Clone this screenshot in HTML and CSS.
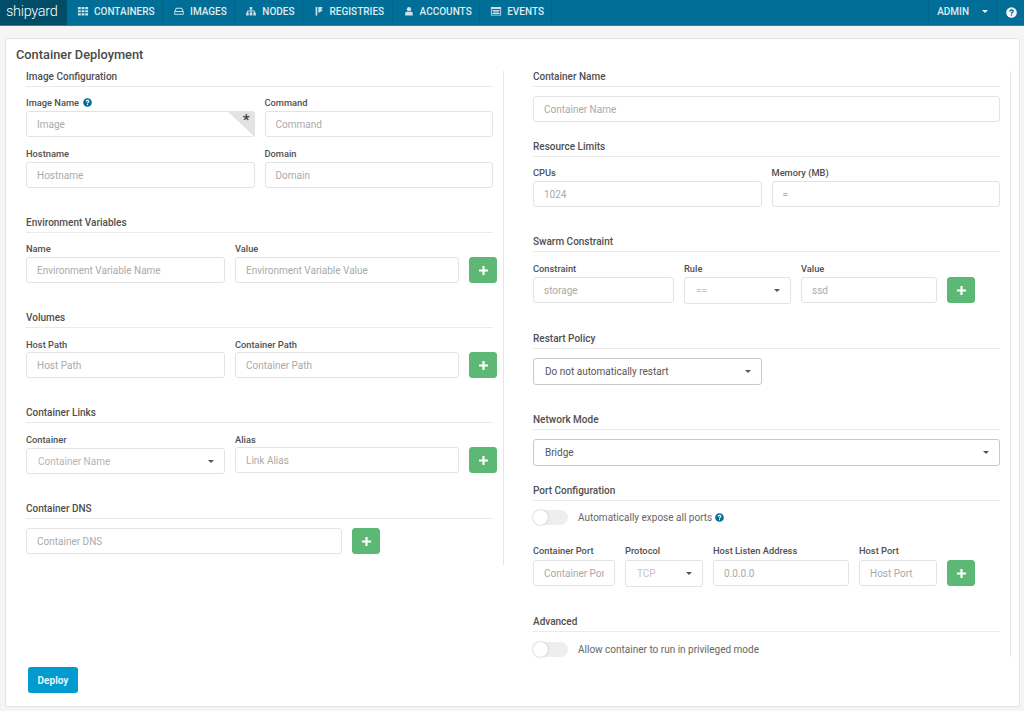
FILE: index.html
```html
<!DOCTYPE html>
<html lang="en">
<head>
<meta charset="utf-8">
<title>Shipyard</title>
<link rel="stylesheet" href="styles.css">
</head>
<body>
<svg class="defs" width="0" height="0" aria-hidden="true">
  <symbol id="help" viewBox="0 0 10 10"><circle cx="5" cy="5" r="4.8" fill="currentColor"/><path class="qm" d="M3 4c0-1.3.9-2 2.1-2s2 .7 2 1.8c0 .8-.5 1.2-1 1.5-.4.3-.5.5-.5.9H4.4c0-.9.2-1.3.8-1.7.4-.3.6-.4.6-.7s-.3-.5-.7-.5-.8.2-.9.8z"/><rect class="qm" x="4.4" y="6.7" width="1.2" height="1.3"/></symbol>
  <symbol id="plus" viewBox="0 0 10 10"><path d="M3.8 0h2.4v3.8H10v2.4H6.2V10H3.8V6.2H0V3.8h3.8z" fill="#fff"/></symbol>
</svg>
<nav class="nav">
  <a class="brand">shipyard</a>
  <a class="nav-item"><svg class="nav-ico" viewBox="0 0 12 10"><path d="M0 0h3.4v2.6H0zM4.3 0h3.4v2.6H4.3zM8.6 0H12v2.6H8.6zM0 3.7h3.4v2.6H0zM4.3 3.7h3.4v2.6H4.3zM8.6 3.7H12v2.6H8.6zM0 7.4h3.4V10H0zM4.3 7.4h3.4V10H4.3zM8.6 7.4H12V10H8.6z"/></svg>CONTAINERS</a>
  <a class="nav-item"><svg class="nav-ico" viewBox="0 0 12 10"><path d="M2.5 1h7L11.5 5v4h-11V5zM3.2 2 1.9 4.7h8.2L8.8 2zM1.5 5.8v2.2h9V5.8z" fill-rule="evenodd"/></svg>IMAGES</a>
  <a class="nav-item"><svg class="nav-ico" viewBox="0 0 12 10"><path d="M4.5 0h3v2.8H6.5v1.4h4v2.2h1.2V10H8.7V6.4H9.5V5.2h-3v1.2h1V10h-3V6.4h1V5.2h-3v1.2h.8V10H.3V6.4h1.2V4.2h4V2.8h-1z"/></svg>NODES</a>
  <a class="nav-item"><svg class="nav-ico nav-ico-reg" viewBox="0 0 8 10"><path d="M0 0h2v10H0zM3.2 0H8v1.2L6 3h2v1.2L4.6 6.4H3.2z"/></svg>REGISTRIES</a>
  <a class="nav-item"><svg class="nav-ico" viewBox="0 0 12 10"><circle cx="6" cy="2.5" r="2.5"/><path d="M1.5 10V7.6C1.5 6 3 5.4 4 5.2c1.2.7 2.8.7 4 0 1 .2 2.5.8 2.5 2.4V10z"/></svg>ACCOUNTS</a>
  <a class="nav-item"><svg class="nav-ico" viewBox="0 0 12 10"><path d="M0 0h12v10H0zM1 2.4v6.6h10V2.4zM2 3.6h8v1H2zM2 5.4h8v1H2zM2 7.1h8v1H2z" fill-rule="evenodd"/></svg>EVENTS</a>
  <span class="nav-fill"></span>
  <a class="nav-item nav-admin">ADMIN<span class="caret caret-white"></span></a>
  <a class="nav-help"><svg class="nav-help-ico"><use href="#help"/></svg></a>
</nav>

<main class="card">
  <h1 class="title">Container Deployment</h1>
  <div class="cols">
    <div class="col col-left">
      <section class="sec">
        <h2 class="head">Image Configuration</h2>
        <div class="row row-half">
          <div class="field"><label class="lbl">Image Name <svg class="help"><use href="#help"/></svg></label><div class="required"><input class="inp" placeholder="Image"><span class="corner"></span><span class="star">*</span></div></div>
          <div class="field"><label class="lbl">Command</label><input class="inp" placeholder="Command"></div>
        </div>
        <div class="row row-half">
          <div class="field"><label class="lbl">Hostname</label><input class="inp" placeholder="Hostname"></div>
          <div class="field"><label class="lbl">Domain</label><input class="inp" placeholder="Domain"></div>
        </div>
      </section>
      <section class="sec sec-left">
        <h2 class="head">Environment Variables</h2>
        <div class="row row-pair">
          <div class="field"><label class="lbl">Name</label><input class="inp" placeholder="Environment Variable Name"></div>
          <div class="field"><label class="lbl">Value</label><input class="inp" placeholder="Environment Variable Value"></div>
          <button class="add"><svg class="plus"><use href="#plus"/></svg></button>
        </div>
      </section>
      <section class="sec sec-left">
        <h2 class="head head-loose">Volumes</h2>
        <div class="row row-pair">
          <div class="field"><label class="lbl lbl-short">Host Path</label><input class="inp" placeholder="Host Path"></div>
          <div class="field"><label class="lbl lbl-short">Container Path</label><input class="inp" placeholder="Container Path"></div>
          <button class="add"><svg class="plus"><use href="#plus"/></svg></button>
        </div>
      </section>
      <section class="sec sec-left">
        <h2 class="head head-loose">Container Links</h2>
        <div class="row row-pair">
          <div class="field"><label class="lbl">Container</label><div class="sel sel-dim sel-links">Container Name<span class="caret"></span></div></div>
          <div class="field"><label class="lbl lbl-short">Alias</label><input class="inp" placeholder="Link Alias"></div>
          <button class="add"><svg class="plus"><use href="#plus"/></svg></button>
        </div>
      </section>
      <section class="sec sec-dns">
        <h2 class="head head-tight">Container DNS</h2>
        <div class="row row-single">
          <input class="inp" placeholder="Container DNS">
          <button class="add"><svg class="plus"><use href="#plus"/></svg></button>
        </div>
      </section>
    </div>
    <div class="col col-right">
      <section class="sec">
        <h2 class="head head-tight">Container Name</h2>
        <input class="inp" placeholder="Container Name">
      </section>
      <section class="sec sec-res">
        <h2 class="head">Resource Limits</h2>
        <div class="row row-half">
          <div class="field"><label class="lbl">CPUs</label><input class="inp" placeholder="1024"></div>
          <div class="field"><label class="lbl">Memory (MB)</label><input class="inp" placeholder="="></div>
        </div>
      </section>
      <section class="sec sec-swarm">
        <h2 class="head head-loose">Swarm Constraint</h2>
        <div class="row row-swarm">
          <div class="field"><label class="lbl">Constraint</label><input class="inp" placeholder="storage"></div>
          <div class="field"><label class="lbl">Rule</label><div class="sel sel-dim sel-faint">==<span class="caret"></span></div></div>
          <div class="field"><label class="lbl">Value</label><input class="inp" placeholder="ssd"></div>
          <button class="add"><svg class="plus"><use href="#plus"/></svg></button>
        </div>
      </section>
      <section class="sec sec-wide">
        <h2 class="head head-tight">Restart Policy</h2>
        <div class="sel sel-strong sel-policy">Do not automatically restart<span class="caret"></span></div>
      </section>
      <section class="sec sec-wide">
        <h2 class="head head-tight">Network Mode</h2>
        <div class="sel sel-strong">Bridge<span class="caret"></span></div>
      </section>
      <section class="sec sec-port">
        <h2 class="head head-toggle">Port Configuration</h2>
        <div class="toggle-row"><span class="toggle"><span class="knob"></span></span><span class="toggle-text">Automatically expose all ports</span><svg class="help help-toggle"><use href="#help"/></svg></div>
        <div class="row row-port">
          <div class="field"><label class="lbl lbl-tall">Container Port</label><input class="inp" placeholder="Container Port"></div>
          <div class="field"><label class="lbl lbl-tall">Protocol</label><div class="sel sel-dim sel-faint">TCP<span class="caret"></span></div></div>
          <div class="field"><label class="lbl lbl-tall">Host Listen Address</label><input class="inp" placeholder="0.0.0.0"></div>
          <div class="field"><label class="lbl lbl-tall">Host Port</label><input class="inp" placeholder="Host Port"></div>
          <button class="add"><svg class="plus"><use href="#plus"/></svg></button>
        </div>
      </section>
      <section class="sec sec-wide">
        <h2 class="head head-tight">Advanced</h2>
        <div class="toggle-row"><span class="toggle"><span class="knob"></span></span><span class="toggle-text">Allow container to run in privileged mode</span></div>
      </section>
    </div>
  </div>
  <button class="deploy">Deploy</button>
</main>
</body>
</html>
```

FILE: styles.css
```css
* { box-sizing: border-box; }
html, body { margin: 0; height: 711px; overflow: hidden; }
body { background: #f5f5f5; font-family: Roboto, "Liberation Sans", sans-serif; color: #555; }
.defs { position: absolute; }
.qm { fill: var(--qm, #fff); }

.nav { display: flex; height: 26px; background: #006e96; border-bottom: 1px solid #0090bd; color: #dfecf2; font-size: 10px; font-weight: 500; }
.brand { width: 67px; background: #014c66; color: #fff; font-size: 14.5px; font-weight: 300; line-height: 24px; padding-left: 6px; letter-spacing: -0.3px; }
.nav-item { display: flex; align-items: center; height: 25px; padding: 0 7.5px 2px 10px; border-right: 1px solid #00648a; gap: 5px; }
.nav-ico { width: 12px; height: 8.5px; fill: #cfe0e8; flex: none; }
.nav-ico-reg { width: 8px; margin: 0 2px 0 1.5px; }
.nav-fill { flex: 1; }
.nav-admin { padding: 0 8px 2px 8px; border-left: 1px solid #00648a; gap: 13px; }
.nav-help { width: 27px; display: flex; align-items: center; justify-content: center; height: 24px; }
.nav-help-ico { width: 11px; height: 11px; margin-left: 2px; color: #f4f8fa; --qm: #006e96; }

.caret { border-left: 3.5px solid transparent; border-right: 3.5px solid transparent; border-top: 3.5px solid #555; width: 0; height: 0; }
.caret-white { border-top-color: #f2f7f9; }

.card { display: flex; flex-direction: column; align-items: flex-start; width: 1015px; height: 669px; margin: 12px 0 0 5px; background: #fff; border: 1px solid #e5e5e5; border-radius: 2px; padding: 0 20px; }
.title { margin: 8px 0 0 -10px; font-size: 12.8px; line-height: 16px; font-weight: 500; color: #4a4a4a; }
.cols { display: grid; grid-template-columns: 467px 467px; column-gap: 40px; margin-top: 8px; }
.col { position: relative; }
.col-left { height: 494px; }
.col-right { height: 586px; }
.col::after { content: ""; position: absolute; left: 477px; top: 0; bottom: 0; width: 1px; background: #e6e6e6; }
.head { margin: 0 0 10px; height: 16px; font-size: 10px; line-height: 12px; font-weight: 500; color: #4f4f4f; border-bottom: 1px solid #eaeaea; }
.head-tight { margin-bottom: 9px; }
.head-loose { margin-bottom: 11px; }
.head-toggle { margin-bottom: 8px; }

.sec-left { margin-top: 28px; }
.sec-dns { margin-top: 29px; }
.sec-res { margin-top: 19px; }
.sec-swarm { margin-top: 28px; }
.sec-wide { margin-top: 29px; }
.sec-port { margin-top: 19px; }

.row { display: grid; align-items: end; }
.row + .row { margin-top: 10px; }
.row-half { grid-template-columns: 1fr 1fr; column-gap: 10px; }
.row-pair { grid-template-columns: 199px 224px 28px; column-gap: 10px; }
.row-single { grid-template-columns: 316px 28px; column-gap: 10px; }
.row-swarm { grid-template-columns: 141px 107px 136px 28px; column-gap: 10px; }
.row-port { grid-template-columns: 82px 78px 136px 78px 28px; column-gap: 10px; margin-top: 20px; }

.field { min-width: 0; }
.lbl { display: block; height: 14px; font-size: 9.3px; line-height: 11px; font-weight: 500; color: #505050; }
.lbl-tall { height: 15px; }
.lbl-short { height: 13px; }
.help { width: 9px; height: 9px; color: #006e96; margin-left: 2px; vertical-align: -1px; }
.inp { display: block; width: 100%; height: 26px; margin-bottom: 1px; border: 1px solid #e3e3e3; border-radius: 3px; background: #fff; padding: 0 10px; font: 400 10px Roboto, sans-serif; color: #555; outline: none; }
.inp::placeholder { color: #aaa; opacity: 1; }
.required { position: relative; }
.corner { position: absolute; right: 0; top: 0; width: 0; height: 0; border-top: 26px solid #e3e3e3; border-left: 28px solid transparent; border-top-right-radius: 3px; }
.star { position: absolute; right: 5px; top: 2px; font-size: 15px; line-height: 15px; font-weight: 700; color: #444; }

.sel { display: flex; align-items: center; justify-content: space-between; height: 27px; border: 1px solid #e3e3e3; border-radius: 3px; padding: 0 10px 0 11px; font-size: 10px; background: #fff; color: #555; }
.sel-dim { color: #b5b5b5; }
.sel-faint { color: #c4c4c4; }
.sel-strong { border-color: #c8c8c8; }
.sel-policy { width: 229px; }
.sel-links { height: 26px; }
.add { display: flex; align-items: center; justify-content: center; width: 28px; height: 26px; margin-bottom: 1px; padding: 0; border: 1px solid #5cb874; border-radius: 3px; background: #5cb874; }
.plus { width: 9px; height: 9px; }

.toggle-row { display: flex; align-items: center; height: 16px; font-size: 10px; color: #666; }
.toggle { position: relative; display: block; width: 35px; height: 15px; background: #eeeeee; border-radius: 8px; margin-right: 10px; }
.knob { position: absolute; left: 0; top: 0; width: 15px; height: 15px; background: #fff; border-radius: 50%; box-shadow: 0 0 2px #aaa; }
.help-toggle { margin-left: 3px; }

.deploy { width: 50px; height: 26px; margin: 10px 0 0 2px; background: #029bcf; color: #e8f6fb; border: 0; border-radius: 3px; font: 700 10px Roboto, sans-serif; }
```
